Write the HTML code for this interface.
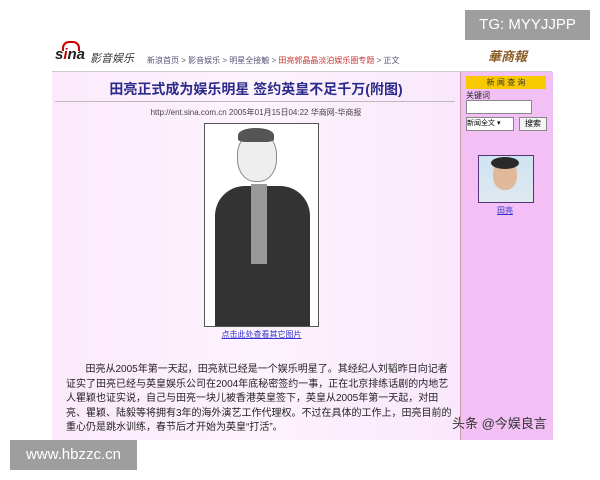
<!DOCTYPE html>
<html><head><meta charset="utf-8"><style>
body{margin:0;width:600px;height:480px;background:#fff;position:relative;overflow:hidden;font-family:"Liberation Sans","Noto Sans CJK SC",sans-serif}
.a{position:absolute;white-space:nowrap}
</style></head><body>
<div class="a" style="left:465px;top:10px;width:125px;height:30px;background:#9e9e9e;color:#fff;font-size:15px;line-height:30px;text-align:center">TG: MYYJJPP</div>
<div class="a" style="left:55px;top:46px;font-size:15px;font-weight:bold;font-style:italic;color:#222">s<span style="color:#c00">i</span>na</div>
<div class="a" style="left:62px;top:41px;width:14px;height:8px;border-radius:7px 7px 0 0;border:2px solid #c00;border-bottom:none"></div>
<div class="a" style="left:90px;top:50px;font-size:11px;color:#333;font-style:italic">影音娱乐</div>
<div class="a" style="left:147px;top:55px;font-size:8px;color:#557">新浪首页 &gt; 影音娱乐 &gt; 明星全接触 &gt; <span style="color:#c33">田亮郭晶晶淡泊娱乐圈专题</span> &gt; 正文</div>
<div class="a" style="left:488px;top:46px;font-size:13px;color:#8a5a20;font-weight:bold;font-style:italic">華商報</div>
<div class="a" style="left:52px;top:72px;width:408px;height:368px;background:linear-gradient(90deg,#fbeafb,#fdf3fd 50%,#f9e8fb)"></div>
<div class="a" style="left:52px;top:71px;width:500px;height:1px;background:#ccc"></div>
<div class="a" style="left:460px;top:72px;width:92px;height:368px;background:#f2c0f4;border-left:1px solid #c9a"></div>
<div class="a" style="left:52px;top:79px;width:408px;text-align:center;font-size:14px;font-weight:bold;color:#2a2a8a">田亮正式成为娱乐明星 签约英皇不足千万(附图)</div>
<div class="a" style="left:55px;top:101px;width:400px;height:1px;background:#bbb"></div>
<div class="a" style="left:52px;top:107px;width:408px;text-align:center;font-size:8px;color:#444">http://ent.sina.com.cn 2005年01月15日04:22 华商网-华商报</div>
<div class="a" style="left:204px;top:123px;width:113px;height:202px;border:1px solid #555;background:#fff;overflow:hidden">
<div class="a" style="left:32px;top:8px;width:38px;height:48px;border-radius:45%;background:#eee;border:1px solid #888"></div>
<div class="a" style="left:33px;top:4px;width:36px;height:14px;border-radius:50% 50% 20% 20%;background:#555"></div>
<div class="a" style="left:10px;top:62px;width:95px;height:150px;border-radius:30px 30px 0 0;background:#333"></div>
<div class="a" style="left:46px;top:60px;width:16px;height:80px;background:#999"></div>
</div>
<div class="a" style="left:204px;top:329px;width:115px;text-align:center;font-size:8px;color:#33c;text-decoration:underline">点击此处查看其它图片</div>
<div class="a" style="left:66px;top:363px;font-size:10px;line-height:14.5px;color:#222">&nbsp;&nbsp;&nbsp;&nbsp;&nbsp;&nbsp;&nbsp;田亮从2005年第一天起，田亮就已经是一个娱乐明星了。其经纪人刘韬昨日向记者<br>证实了田亮已经与英皇娱乐公司在2004年底秘密签约一事，正在北京排练话剧的内地艺<br>人瞿颖也证实说，自己与田亮一块儿被香港英皇签下，英皇从2005年第一天起，对田<br>亮、瞿颖、陆毅等将拥有3年的海外演艺工作代理权。不过在具体的工作上，田亮目前的<br>重心仍是跳水训练，春节后才开始为英皇“打活”。</div>
<div class="a" style="left:466px;top:76px;width:80px;height:13px;background:#f8c800;font-size:8px;text-align:center;line-height:13px;color:#333">新 闻 查 询</div>
<div class="a" style="left:466px;top:90px;font-size:8px;color:#222">关键词</div>
<div class="a" style="left:466px;top:100px;width:64px;height:12px;background:#fff;border:1px solid #888"></div>
<div class="a" style="left:466px;top:117px;width:46px;height:12px;background:#fff;border:1px solid #888;font-size:7px;line-height:12px">新闻全文 ▾</div>
<div class="a" style="left:519px;top:117px;width:26px;height:12px;background:#f4f4f4;border:1px solid #888;font-size:8px;line-height:12px;text-align:center">搜索</div>
<div class="a" style="left:478px;top:155px;width:54px;height:46px;border:1px solid #537;background:linear-gradient(#cfe3f2,#dfe9f0)"><div class="a" style="left:14px;top:4px;width:24px;height:30px;border-radius:45%;background:#e0b89a"></div><div class="a" style="left:12px;top:1px;width:28px;height:12px;border-radius:50%;background:#2a2a2a"></div></div>
<div class="a" style="left:497px;top:205px;font-size:8px;color:#33c;text-decoration:underline">田亮</div>
<div class="a" style="left:452px;top:413px;font-size:13px;color:#333">头条 @今娱良言</div>
<div class="a" style="left:10px;top:440px;width:127px;height:30px;background:#9e9e9e;color:#fff;font-size:15px;line-height:30px;text-align:center">www.hbzzc.cn</div>
</body></html>
